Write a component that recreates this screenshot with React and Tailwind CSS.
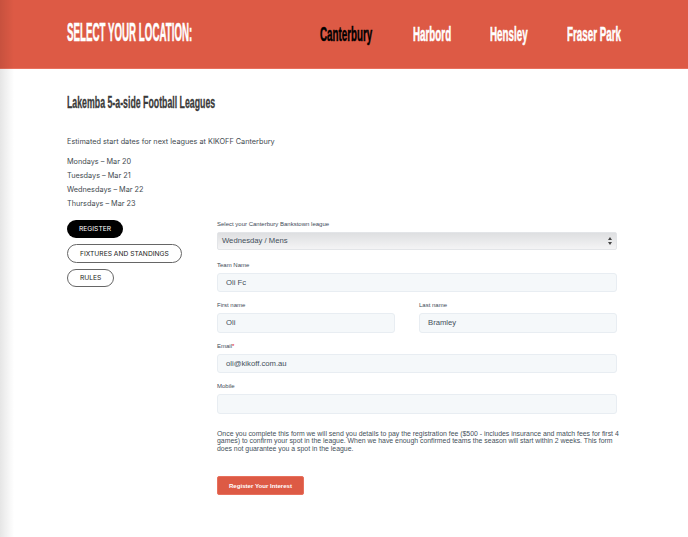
import React from "react";

const heading = { fontFamily: '"Liberation Sans", sans-serif' };
const body = { fontFamily: "Inter, sans-serif" };

function NavLink({ label, width, active }) {
  return (
    <a
      className={`block text-[20px] leading-[22px] font-bold whitespace-nowrap origin-left scale-x-[0.49] [-webkit-text-stroke:0.5px_currentColor] ${width} ${
        active ? "text-black" : "text-white"
      }`}
    >
      {label}
    </a>
  );
}

function Field({ label, required, className, children }) {
  return (
    <div className={className}>
      <label className="block text-[6px] leading-[9px] text-[#3d4a57] mb-[3px]">
        {label}
        {required && <span className="text-red-600">*</span>}
      </label>
      {children}
    </div>
  );
}

function TextInput({ value }) {
  return (
    <div className="h-[19.5px] bg-[#f5f8fa] border border-[#e8edf2] rounded-[3px] pl-[8px] text-[7.7px] leading-[17px] text-[#444f5a]">
      {value}
    </div>
  );
}

export default function App() {
  return (
    <div className="relative w-[688px] h-[537px] overflow-hidden bg-white" style={heading}>
      {/* left edge shadow */}
      <div className="absolute left-0 top-0 w-[14px] h-full bg-gradient-to-r from-black/10 to-transparent"></div>

      <div className="h-[69px] bg-[#dd5a45] border-b border-[#e8705d] pl-[67px] flex">
        <h2 className="w-[253px] pt-[20px] text-[25px] leading-[24px] font-bold text-white whitespace-nowrap origin-left scale-x-[0.39] [-webkit-text-stroke:0.5px_currentColor]">
          SELECT YOUR LOCATION:
        </h2>
        <nav className="flex gap-[40px] pt-[23px]">
          <NavLink label="Canterbury" width="w-[53px]" active />
          <NavLink label="Harbord" width="w-[37px]" />
          <NavLink label="Hensley" width="w-[37px]" />
          <NavLink label="Fraser Park" width="w-[54px]" />
        </nav>
      </div>

      <div className="pl-[67px] pr-[71px]">
        <h1 className="mt-[25px] text-[17px] leading-[18px] font-bold text-[#3a3a3a] whitespace-nowrap origin-left scale-x-[0.516] [-webkit-text-stroke:0.3px_currentColor]">
          Lakemba 5-a-side Football Leagues
        </h1>

        <div className="text-[7.3px] text-[#3f4a4f]" style={body}>
          <p className="mt-[24px] leading-[12px]">
            Estimated start dates for next leagues at KIKOFF Canterbury
          </p>
          <div className="mt-[7px] leading-[14px]">
            <p>Mondays – Mar 20</p>
            <p>Tuesdays – Mar 21</p>
            <p>Wednesdays – Mar 22</p>
            <p>Thursdays – Mar 23</p>
          </div>
        </div>

        <div className="flex mt-[9px]">
          <div className="w-[150px] flex flex-col items-start gap-[6px] text-[6.7px] text-[#222]" style={body}>
            <div className="h-[18px] px-[12px] leading-[18px] rounded-full bg-black text-white">REGISTER</div>
            <div className="h-[19px] px-[12px] leading-[18px] rounded-full border border-[#666]">
              FIXTURES AND STANDINGS
            </div>
            <div className="h-[18px] px-[12px] leading-[17px] rounded-full border border-[#666]">RULES</div>
          </div>

          <div className="w-[400px] -mt-[0.5px]">
            <Field label="Select your Canterbury Bankstown league">
              <div className="h-[18.5px] flex items-center justify-between px-[4px] rounded-[2px] border border-[#e3e5e8] bg-gradient-to-b from-[#dedfe1] to-[#f4f4f5] text-[7.7px] text-[#444f5a]">
                <span>Wednesday / Mens</span>
                <svg width="4" height="8" viewBox="0 0 4 8">
                  <path d="M2 0L4 3H0Z M2 8L0 5H4Z" fill="#444" />
                </svg>
              </div>
            </Field>
            <Field label="Team Name" className="mt-[10.5px]">
              <TextInput value="Oli Fc" />
            </Field>
            <div className="flex gap-[24px] mt-[9px]">
              <Field label="First name" className="w-[178px]">
                <TextInput value="Oli" />
              </Field>
              <Field label="Last name" className="w-[198px]">
                <TextInput value="Bramley" />
              </Field>
            </div>
            <Field label="Email" required className="mt-[9px]">
              <TextInput value="oli@kikoff.com.au" />
            </Field>
            <Field label="Mobile" className="mt-[9px]">
              <TextInput value="" />
            </Field>
            <p className="mt-[16px] text-[6.9px] leading-[7.6px] text-[#444f5a] w-[404px]">
              Once you complete this form we will send you details to pay the registration fee ($500 - includes
              insurance and match fees for first 4 games) to confirm your spot in the league. When we have enough
              confirmed teams the season will start within 2 weeks. This form does not guarantee you a spot in the
              league.
            </p>
            <button className="block mt-[24px] w-[87px] h-[19px] rounded-[2px] bg-[#dd5a45] text-white text-[6.1px] font-bold border border-[#e8705d]">
              Register Your Interest
            </button>
          </div>
        </div>
      </div>
    </div>
  );
}
